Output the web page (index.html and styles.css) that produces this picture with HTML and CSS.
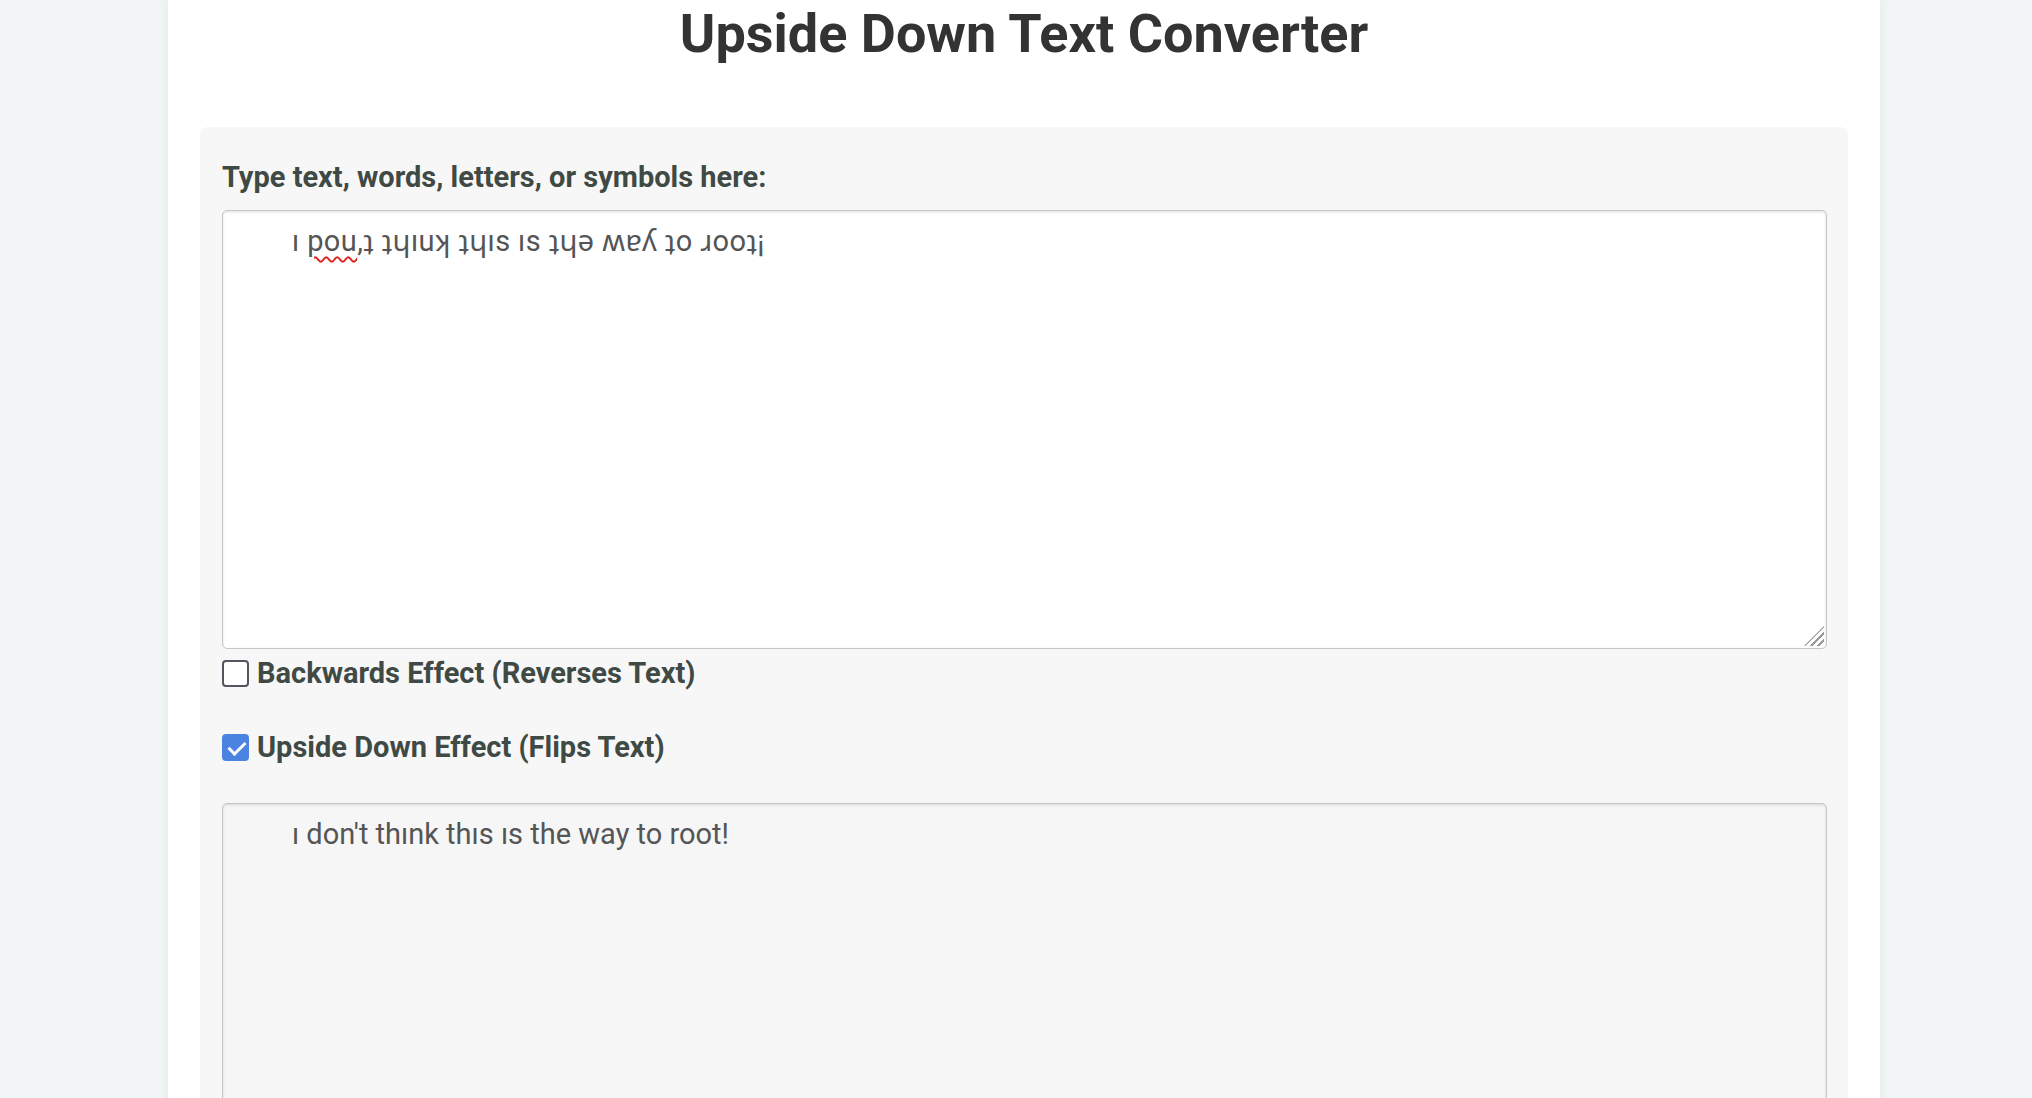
FILE: index.html
```html
<!DOCTYPE html>
<html lang="en">
<head>
<meta charset="utf-8">
<title>Upside Down Text Converter</title>
<link rel="stylesheet" href="styles.css">
</head>
<body>
<main class="card">
  <h1 class="title">Upside Down Text Converter</h1>
  <section class="panel">
    <label class="field-label" for="src">Type text, words, letters, or symbols here:</label>
    <div class="input-wrap">
      <textarea id="src" class="box box-input" spellcheck="false">ı pou,ʇ ʇɥıuʞ ʇɥıs ıs ʇɥǝ ʍɐʎ ʇo ɹooʇ¡</textarea>
      <div class="spell-mirror" aria-hidden="true">ı <span class="misspelled">pou</span>,ʇ ʇɥıuʞ ʇɥıs ıs ʇɥǝ ʍɐʎ ʇo ɹooʇ¡</div>
      <span class="grip" aria-hidden="true"></span>
    </div>
    <label class="option option-first"><input type="checkbox" class="check"><span>Backwards Effect (Reverses Text)</span></label>
    <label class="option option-second"><input type="checkbox" class="check" checked><span>Upside Down Effect (Flips Text)</span></label>
    <textarea class="box box-output" readonly>ı don't thınk thıs ıs the way to root!</textarea>
  </section>
</main>
</body>
</html>
```
FILE: styles.css
```css
html, body {
  margin: 0;
  padding: 0;
  height: 100%;
  overflow: hidden;
}
body {
  background: #f2f5f6;
  font-family: Roboto, "Noto Sans", "DejaVu Sans", sans-serif;
}
.card {
  box-sizing: border-box;
  width: 1712px;
  margin-left: 168px;
  min-height: 100%;
  background: #ffffff;
  box-shadow: 0 0 12px rgba(0, 0, 0, 0.06);
  padding: 2px 32px 0 32px;
}
.title {
  margin: 0 0 62px;
  text-align: center;
  font-size: 54px;
  font-weight: 700;
  line-height: normal;
  color: #333333;
}
.panel {
  display: flex;
  flex-direction: column;
  align-items: stretch;
  background: #f7f7f7;
  border-radius: 8px;
  padding: 33px 21px 40px 22px;
}
.field-label {
  display: block;
  font-size: 29px;
  font-weight: 700;
  line-height: normal;
  color: #3f4a45;
  margin: 0 0 16px;
}
.input-wrap {
  position: relative;
}
.box {
  display: block;
  box-sizing: border-box;
  width: 100%;
  height: 439px;
  margin: 0;
  border: 1px solid #c6c6c6;
  border-radius: 5px;
  box-shadow: inset 0 1px 3px rgba(0, 0, 0, 0.12);
  padding: 13px 20px 13px 69px;
  font-family: Roboto, "Noto Sans", "DejaVu Sans", sans-serif;
  font-size: 29px;
  line-height: 34px;
  color: #555555;
  outline: none;
  resize: none;
}
.box-input {
  background: #ffffff;
  letter-spacing: 0.4px;
}
.spell-mirror {
  position: absolute;
  inset: 0;
  box-sizing: border-box;
  border: 1px solid transparent;
  padding: 13px 20px 13px 69px;
  font-size: 29px;
  line-height: 34px;
  letter-spacing: 0.4px;
  color: transparent;
  pointer-events: none;
  white-space: pre-wrap;
}
.misspelled {
  text-decoration: underline wavy #e0201a;
  text-decoration-thickness: 1.5px;
  text-underline-offset: 5px;
}
.grip {
  position: absolute;
  right: 3px;
  bottom: 3px;
  width: 20px;
  height: 20px;
  background: repeating-linear-gradient(135deg, transparent 0 3px, #9a9a9a 3px 5px);
  clip-path: polygon(100% 0, 100% 100%, 0 100%);
  pointer-events: none;
}
.box-output {
  background: #f6f6f6;
  margin-top: 39px;
}
.option {
  display: flex;
  align-items: center;
  gap: 8px;
  font-size: 29px;
  font-weight: 700;
  line-height: normal;
  color: #3f4a45;
}
.option-first {
  margin-top: 7px;
}
.option-second {
  margin-top: 40px;
}
.check {
  appearance: none;
  -webkit-appearance: none;
  position: relative;
  flex: none;
  width: 27px;
  height: 27px;
  margin: 0;
  box-sizing: border-box;
  border: 2px solid #555560;
  border-radius: 4px;
  background: #ffffff;
}
.check:checked {
  background: #4a84e0;
  border-color: #4a84e0;
}
.check:checked::after {
  content: "";
  position: absolute;
  left: 8px;
  top: 2px;
  width: 7px;
  height: 14px;
  border-right: 3px solid #ffffff;
  border-bottom: 3px solid #ffffff;
  transform: rotate(45deg);
}
```
